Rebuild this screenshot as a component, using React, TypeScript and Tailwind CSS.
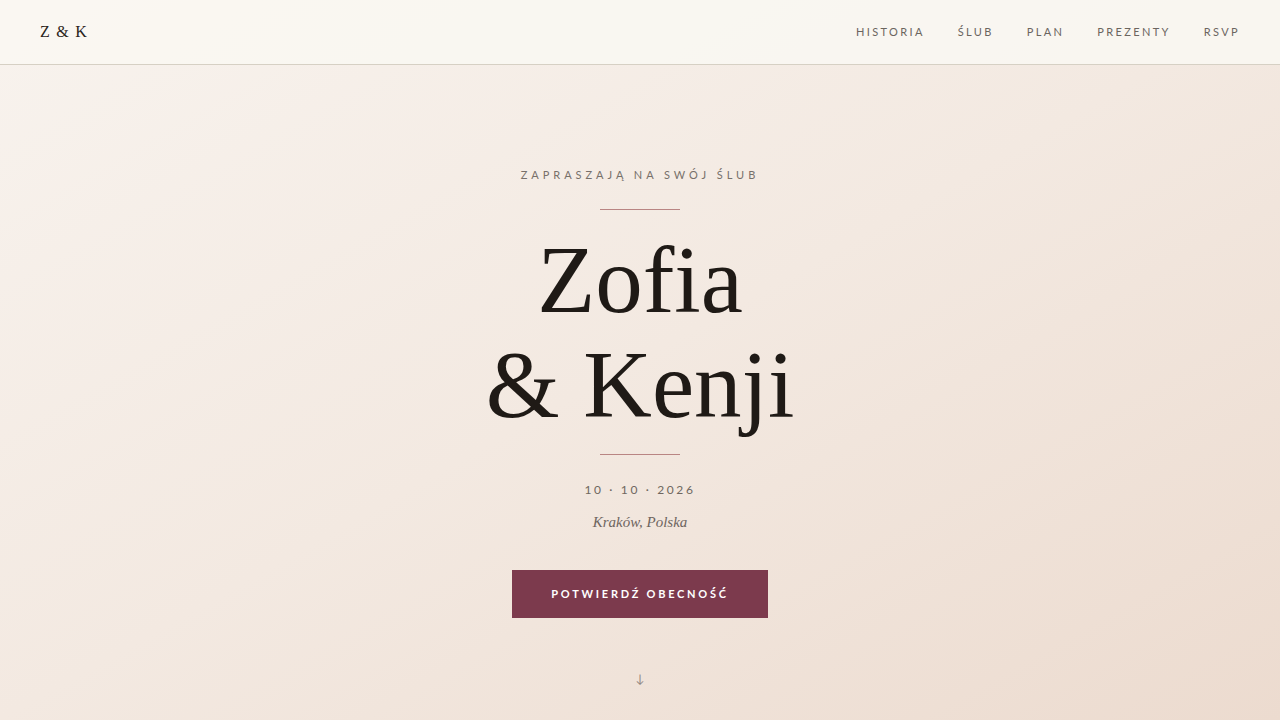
const navItems = ["Historia", "Ślub", "Plan", "Prezenty", "RSVP"];

const serif = "font-['Liberation_Serif','DejaVu_Serif',serif]";
const sans = "font-['Lato','Open_Sans',sans-serif]";

export default function App() {
  return (
    <div className="min-h-screen flex flex-col bg-linear-to-br from-[#f8f3ee] via-[#f3e9e1] to-[#ecdbcf]">
      <header className="h-[65px] shrink-0 flex items-center justify-between px-10 bg-[#f9f7f2]/90 border-b border-[#d6d0c4]">
        <a className={`${serif} text-[16px] tracking-[0.08em] text-[#2a2420]`}>Z &amp; K</a>
        <nav className={`${sans} flex items-center gap-[33px] text-[11px] tracking-[0.215em] uppercase text-[#6b655f]`}>
          {navItems.map((item) => (
            <a key={item} className="hover:text-[#7d3b4d] transition-colors">
              {item}
            </a>
          ))}
        </nav>
      </header>

      <main className="flex-1 flex flex-col items-center text-center pt-[102px]">
        <p className={`${sans} text-[11px] leading-4 tracking-[0.36em] uppercase text-[#77706a]`}>
          Zapraszają na swój ślub
        </p>
        <div className="mt-[26px] w-20 h-px bg-[#b98583]" />

        <h1 className={`${serif} mt-[18px] text-[95px] leading-[105px] text-[#1f1a16]`}>
          Zofia
          <br />
          &amp; Kenji
        </h1>

        <div className="mt-4 w-20 h-px bg-[#b98583]" />

        <p className={`${sans} mt-[25px] text-[12px] leading-5 tracking-[0.22em] text-[#6f6760]`}>
          10 · 10 · 2026
        </p>
        <p className={`${serif} mt-[10px] text-[15px] leading-6 italic text-[#6e655f]`}>
          Kraków, Polska
        </p>

        <button
          className={`${sans} mt-9 w-64 h-12 bg-[#7c3a4d] text-white text-[11px] font-bold tracking-[0.25em] uppercase hover:bg-[#6a2f40] transition-colors`}
        >
          Potwierdź obecność
        </button>

        <span className={`${sans} mt-[53px] text-[12px] leading-4 text-[#8f8780]`}>↓</span>
      </main>
    </div>
  );
}
